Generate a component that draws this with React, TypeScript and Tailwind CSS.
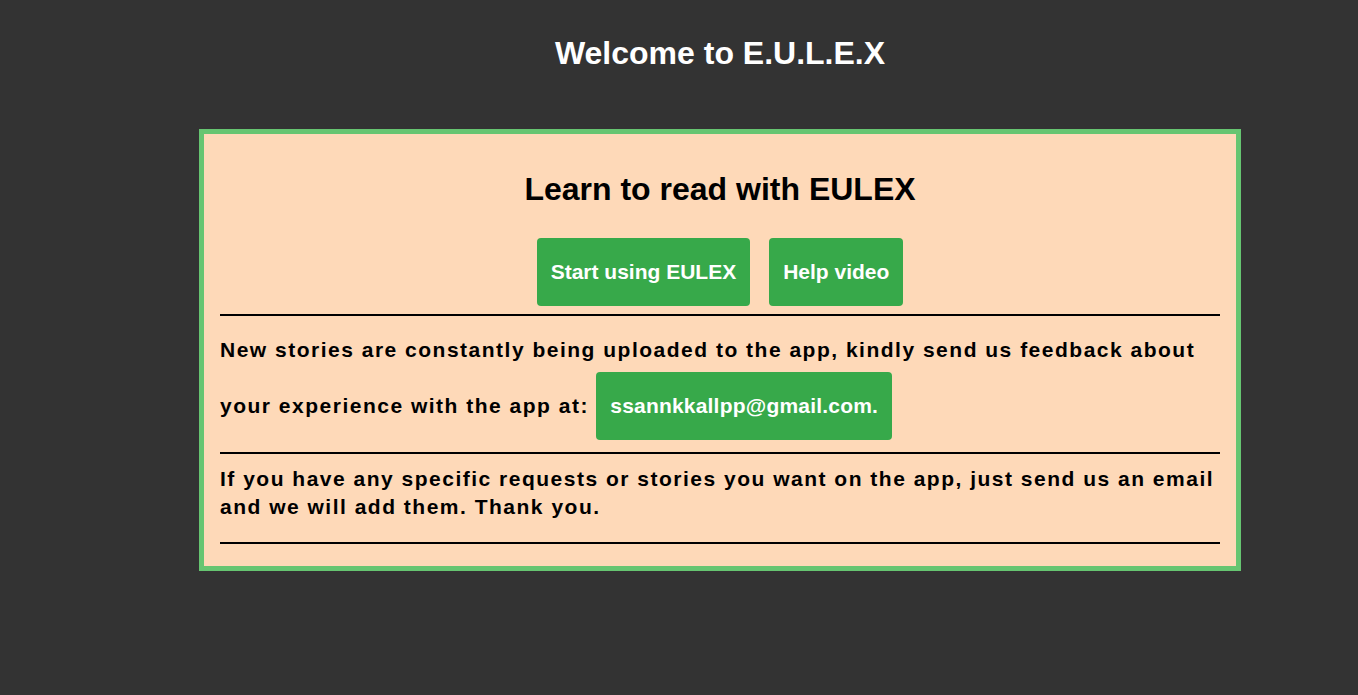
export default function App() {
  return (
    <div className="min-h-[695px] bg-[#333333] pl-[82px] font-['Liberation_Sans',Arial,sans-serif]">
      <h1 className="pt-[35px] text-center text-[32px] font-bold leading-[37px] text-white">
        Welcome to E.U.L.E.X
      </h1>
      <div className="mx-auto mt-[57px] w-[1042px] border-[5px] border-[#66c571] bg-[#fed9b8] px-4 pb-[22px]">
        <h2 className="pt-[37px] text-center text-[32px] font-bold leading-[36px] text-black">
          Learn to read with EULEX
        </h2>
        <div className="mt-[31px] flex justify-center gap-[19px]">
          <a className="rounded bg-[#37a94a] px-[14px] py-5 text-[21px] font-bold leading-[28px] text-white">
            Start using EULEX
          </a>
          <a className="rounded bg-[#37a94a] px-[14px] py-5 text-[21px] font-bold leading-[28px] text-white">
            Help video
          </a>
        </div>
        <hr className="mt-2 border-t-2 border-black" />
        <p className="mt-5 text-[21px] font-bold leading-[28px] tracking-[1.5px] text-black">
          New stories are constantly being uploaded to the app, kindly send us feedback about your experience with the app at:{" "}
          <a className="my-2 inline-block rounded bg-[#37a94a] px-[14px] py-5 tracking-[0.2px] text-white">
            ssannkkallpp@gmail.com.
          </a>
        </p>
        <hr className="mt-1 border-t-2 border-black" />
        <p className="mt-[11px] text-[21px] font-bold leading-[28px] tracking-[1.5px] text-black">
          If you have any specific requests or stories you want on the app, just send us an email and we will add them. Thank you.
        </p>
        <hr className="mt-[21px] border-t-2 border-black" />
      </div>
    </div>
  );
}
